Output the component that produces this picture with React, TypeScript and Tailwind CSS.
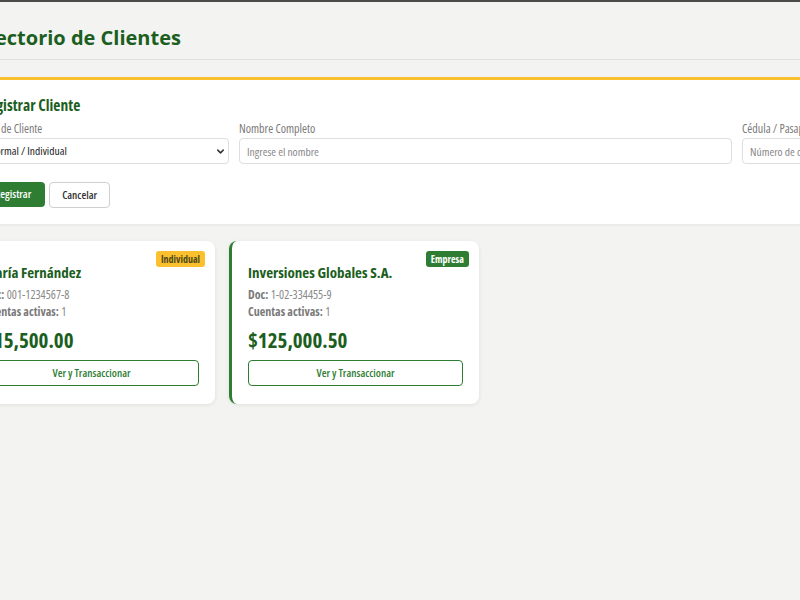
import { ChevronDown } from 'lucide-react'

type Client = {
  id: string
  name: string
  doc: string
  accounts: number
  balance: string
  kind: 'Individual' | 'Empresa'
}

const CLIENTS: Client[] = [
  { id: 'c1', name: 'María Fernández', doc: '001-1234567-8', accounts: 1, balance: '$15,500.00', kind: 'Individual' },
  { id: 'c2', name: 'Inversiones Globales S.A.', doc: '1-02-334455-9', accounts: 1, balance: '$125,000.50', kind: 'Empresa' },
]

function ClientCard({ client }: { client: Client }) {
  const isCompany = client.kind === 'Empresa'
  return (
    <div
      className={`relative w-[250px] rounded-lg bg-white px-4 pt-[21px] pb-[18px] shadow-[0_1px_4px_rgba(0,0,0,0.08)] border-l-[3px] ${
        isCompany ? 'border-[#2e7d32]' : 'border-[#fbc02d]'
      }`}
    >
      <span
        className={`absolute top-[10px] right-[10px] rounded-[3px] px-[5px] py-[2px] text-[10px] font-bold leading-[12px] ${
          isCompany ? 'bg-[#2e7d32] text-white' : 'bg-[#fbc02d] text-[#4e4a1a]'
        }`}
      >
        {client.kind}
      </span>
      <h3 className="text-[15px] font-bold leading-[20px] text-[#1b5e20]">{client.name}</h3>
      <p className="mt-[6px] text-[12px] leading-[14px] text-[#8a8a8a]">
        <span className="font-bold text-[#7a7a7a]">Doc:</span> {client.doc}
      </p>
      <p className="mt-[3px] text-[12px] leading-[14px] text-[#8a8a8a]">
        <span className="font-bold text-[#7a7a7a]">Cuentas activas:</span> {client.accounts}
      </p>
      <p className="mt-[9px] text-[21px] font-bold leading-[24px] text-[#1b5e20]">{client.balance}</p>
      <button className="mt-[8px] h-[26px] w-full rounded-[4px] border-[1.5px] border-[#2e7d32] bg-white text-[11px] font-semibold text-[#2e7d32]">
        Ver y Transaccionar
      </button>
    </div>
  )
}

export default function App() {
  return (
    <div className="min-h-screen overflow-hidden border-t-2 border-[#4a4a4a] bg-[#f3f4f2] font-['Segoe_UI','Open_Sans',sans-serif] [font-stretch:87.5%]">
      <div className="ml-[-35px] w-[1100px]">
        <header className="flex h-[58px] items-center pt-[14px] border-b border-[#dfe0de]">
          <h1 className="text-[20px] font-bold text-[#1b5e20] [font-stretch:100%]">Directorio de Clientes</h1>
        </header>

        <section className="mt-[17px] rounded-b-md border-t-[3px] border-[#fbc02d] bg-white px-4 pt-[16px] pb-[16px] shadow-[0_1px_3px_rgba(0,0,0,0.06)]">
          <h2 className="text-[15.5px] font-bold leading-[18px] text-[#1b5e20]">Registrar Cliente</h2>
          <div className="mt-[8px] flex gap-[10px]">
            <div className="w-[248px]">
              <label className="block text-[12px] leading-[14px] text-[#7a7a7a]">Tipo de Cliente</label>
              <div className="mt-[2px] flex h-[26px] items-center justify-between rounded-[4px] border border-[#dedede] pl-[7px] pr-[2px] text-[11.5px] text-[#222]">
                <span>Normal / Individual</span>
                <ChevronDown size={11} strokeWidth={3.2} className="text-[#333]" />
              </div>
            </div>
            <div className="w-[493px]">
              <label className="block text-[12px] leading-[14px] text-[#7a7a7a]">Nombre Completo</label>
              <input
                placeholder="Ingrese el nombre"
                className="mt-[2px] h-[26px] w-full rounded-[4px] border border-[#dedede] px-[7px] text-[11.5px] placeholder:text-[#888] outline-none"
              />
            </div>
            <div className="w-[248px]">
              <label className="block text-[12px] leading-[14px] text-[#7a7a7a]">Cédula / Pasaporte</label>
              <input
                placeholder="Número de documento"
                className="mt-[2px] h-[26px] w-full rounded-[4px] border border-[#dedede] px-[7px] text-[11.5px] placeholder:text-[#888] outline-none"
              />
            </div>
          </div>
          <div className="mt-[18px] flex gap-[4px]">
            <button className="h-[25px] rounded-[4px] bg-[#2e7d32] px-[14px] text-[11px] font-semibold text-white">
              Registrar
            </button>
            <button className="h-[26px] rounded-[4px] border-[1.5px] border-[#cfcfcf] bg-white px-[12px] text-[11px] font-semibold text-[#333]">
              Cancelar
            </button>
          </div>
        </section>

        <div className="mt-[17px] flex gap-[14px]">
          {CLIENTS.map((c) => (
            <ClientCard key={c.id} client={c} />
          ))}
        </div>
      </div>
    </div>
  )
}
